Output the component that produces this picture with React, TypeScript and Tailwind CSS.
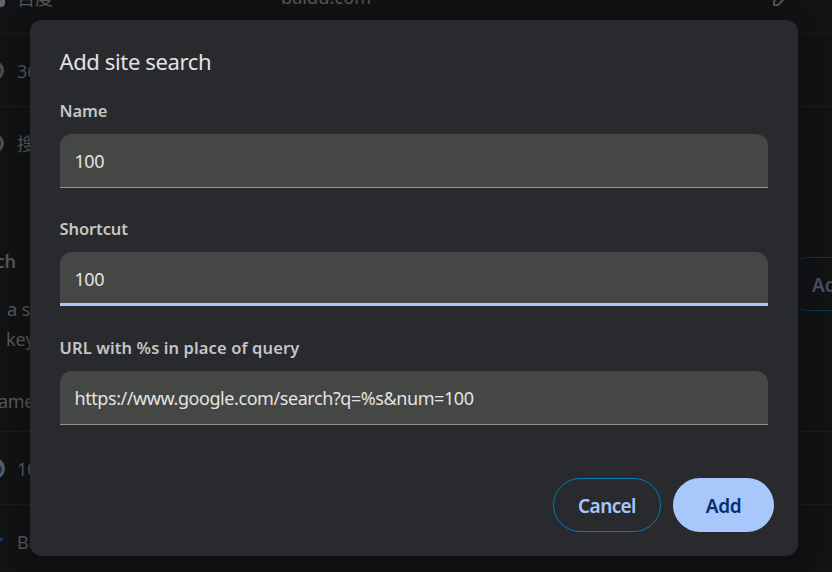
import { ReactNode } from 'react';

function EngineRow({ icon, name, url, last }: { icon: ReactNode; name: string; url?: string; last?: boolean }) {
  return (
    <div className={`flex h-[73px] shrink-0 items-center ${last ? '' : 'border-b border-[#1b1c1e]'}`}>
      <div className="flex w-[17px] shrink-0 items-center">{icon}</div>
      <span className="w-[264px] whitespace-nowrap pt-[1px] text-[18px] leading-6">{name}</span>
      {url && <span className="grow text-[18px] leading-6 tracking-[0.1px]">{url}</span>}
      {url && (
        <svg className="mr-[40px] size-[20px]" viewBox="0 0 20 20" fill="none" stroke="#505152" strokeWidth="2">
          <path d="M2 18v-4L14 2l4 4L6 18Z" />
        </svg>
      )}
    </div>
  );
}

function Disc({ color, core }: { color: string; core: string }) {
  return (
    <svg className="-ml-[15px] size-[19px] shrink-0" viewBox="0 0 19 19">
      <circle cx="9.5" cy="9.5" r="8" fill={core} stroke={color} strokeWidth="3" />
    </svg>
  );
}

function Field({ label, value, focused, labelTracking }: { label: string; value: string; focused?: boolean; labelTracking?: string }) {
  return (
    <label className="flex flex-col">
      <span className={`-ml-[0.5px] h-6 whitespace-nowrap text-[16.5px] font-semibold leading-6 text-[#c4c6c5] ${labelTracking ?? 'tracking-[-0.1px]'}`}>{label}</span>
      <span
        className={`mt-[11px] flex h-[54px] items-center rounded-t-[12px] bg-[#454745] px-[14.5px] text-[18px] tracking-[-0.43px] text-[#e3e3e3] ${
          focused ? 'border-b-[3px] border-[#a8c7fa] pt-[4px]' : 'border-b border-[#8e918f] pt-[2px]'
        }`}
      >
        {value}
      </span>
    </label>
  );
}

export default function App() {
  return (
    <main className="relative h-[572px] w-[832px] overflow-hidden bg-[#111214] font-['Noto_Sans','Noto_Sans_CJK_SC',sans-serif] text-[#555656]">
      <div className="-mt-[39px] flex flex-col">
        <EngineRow icon={<svg className="-ml-[14px] size-[19px]" viewBox="0 0 19 19"><rect width="19" height="19" rx="4" fill="#646469" /><circle cx="10" cy="10" r="5" fill="#202477" /></svg>} name="百度" url="baidu.com" />
        <EngineRow icon={<Disc color="#4c4d4e" core="#28292b" />} name="360" />
        <EngineRow icon={<Disc color="#4c4d4e" core="#28292b" />} name="搜狗" last />
        <div className="mt-[77px] flex h-[54px] items-start justify-between">
          <span className="-mt-[8px] flex w-[16px] justify-end text-[18px] font-semibold leading-6">ch</span>
          <span className="-mr-[47px] flex h-[54px] w-[98px] items-center rounded-full border border-[#00374f] pl-[30px] pt-[2px] text-[19px] font-semibold text-[#454d61]">Add</span>
        </div>
        <div className="-mt-[17px] flex h-[60px] flex-col text-[18px] leading-[30px]">
          <span className="whitespace-nowrap pl-[7px]">a s</span>
          <span className="whitespace-nowrap pl-[6px]">key</span>
        </div>
        <div className="mt-[36px] flex h-[42px] items-start border-b border-[#1b1c1e] text-[18px] leading-6">
          <span className="-ml-[2px] -mt-px tracking-[-0.4px]">ame</span>
        </div>
        <EngineRow icon={<svg className="-ml-[16px] size-[21px]" viewBox="0 0 21 21"><circle cx="10.5" cy="10.5" r="10.5" fill="#5b5c60" /><circle cx="12" cy="11.5" r="6" fill="#17315f" /></svg>} name="100" />
        <EngineRow icon={<svg className="h-4 w-1" viewBox="0 0 4 16"><path d="M0 4h4L0 8Z" fill="#173a78" /></svg>} name="Be" last />
      </div>

      <div className="absolute left-[30px] top-[20px] flex h-[536px] w-[768px] flex-col rounded-[12px] bg-[#292a2d] px-[30px] shadow-[0_4px_16px_6px_rgba(0,0,0,0.18)]">
        <h1 className="-ml-[0.5px] mt-[25px] h-[32px] text-[22px] leading-[32px] tracking-[-0.37px] text-[#e3e3e3]">Add site search</h1>
        <div className="mt-[22px] flex flex-col">
          <Field label="Name" value="100" />
          <div className="mt-[29px]">
            <Field label="Shortcut" value="100" focused />
          </div>
          <div className="mt-[30px]">
            <Field label="URL with %s in place of query" value="https://www.google.com/search?q=%s&num=100" labelTracking="tracking-[0.11px]" />
          </div>
        </div>
        <div className="mb-6 mr-[-6px] mt-auto flex justify-end gap-3">
          <button className="h-[54px] w-[108px] rounded-full border border-[#047db7] pt-[2px] text-[19px] font-semibold tracking-[-0.6px] text-[#a8c7fa]">Cancel</button>
          <button className="h-[54px] w-[101px] rounded-full bg-[#a8c7fa] pt-[2px] text-[19px] font-semibold tracking-[-0.3px] text-[#062e6f]">Add</button>
        </div>
      </div>
    </main>
  );
}
